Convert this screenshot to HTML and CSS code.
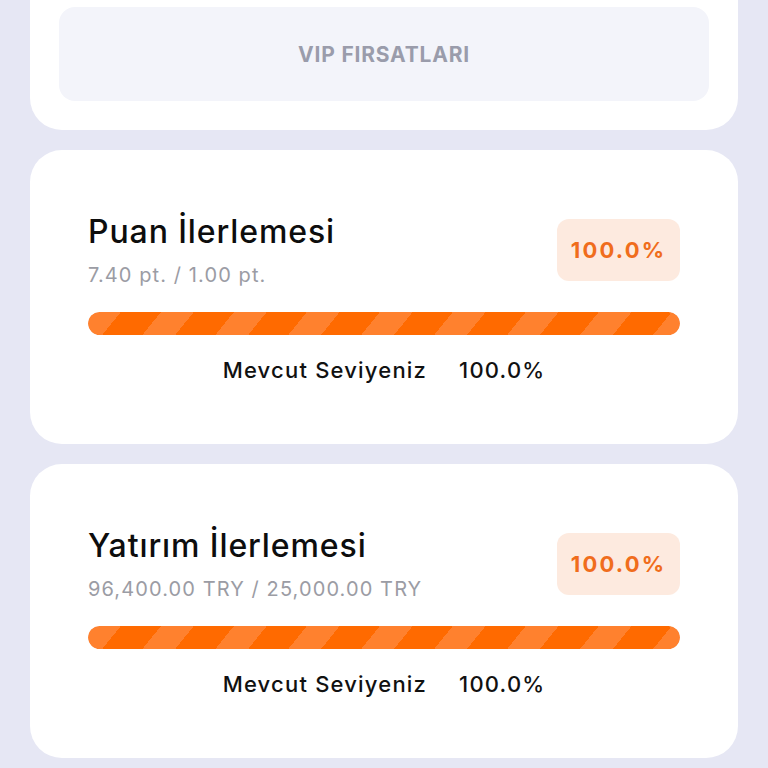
FILE: index.html
```html
<!DOCTYPE html>
<html lang="tr">

<head>
    <meta charset="UTF-8">
    <meta name="viewport" content="width=device-width, initial-scale=1.0">
    <title>VIP</title>
    <link rel="stylesheet" href="styles.css">
</head>

<body>
    <div class="page">
        <div class="card card-top">
            <a href="#" class="vip-btn">VIP FIRSATLARI</a>
        </div>

        <div class="card progress-card">
            <div class="head">
                <div class="head-text">
                    <h2 class="title">Puan İlerlemesi</h2>
                    <p class="sub">7.40 pt. / 1.00 pt.</p>
                </div>
                <span class="badge">100.0%</span>
            </div>
            <div class="bar">
                <div class="bar-fill" style="width: 100%"></div>
            </div>
            <div class="level">
                <span>Mevcut Seviyeniz</span>
                <span>100.0%</span>
            </div>
        </div>

        <div class="card progress-card">
            <div class="head">
                <div class="head-text">
                    <h2 class="title">Yatırım İlerlemesi</h2>
                    <p class="sub">96,400.00 TRY / 25,000.00 TRY</p>
                </div>
                <span class="badge">100.0%</span>
            </div>
            <div class="bar">
                <div class="bar-fill" style="width: 100%"></div>
            </div>
            <div class="level">
                <span>Mevcut Seviyeniz</span>
                <span>100.0%</span>
            </div>
        </div>
    </div>
</body>

</html>
```

FILE: styles.css
```css
* {
    margin: 0;
    padding: 0;
    box-sizing: border-box;
}

html,
body {
    background: #e6e7f4;
}

body {
    font-family: Inter, "Noto Sans", sans-serif;
    color: #111;
    overflow: hidden;
}

.page {
    display: flex;
    flex-direction: column;
    gap: 20px;
    padding: 0 30px;
}

.card {
    background: #fff;
    border-radius: 32px;
}

.card-top {
    margin-top: -60px;
    padding: 67px 29px 29px;
}

.vip-btn {
    display: flex;
    align-items: center;
    justify-content: center;
    height: 94px;
    background: #f3f4fa;
    border-radius: 16px;
    color: #9a9cab;
    font-size: 21px;
    font-weight: 700;
    text-decoration: none;
    letter-spacing: 0.8px;
}

.progress-card {
    height: 294px;
    padding: 62px 58px 0;
}

.head {
    display: flex;
    align-items: center;
    justify-content: space-between;
}

.title {
    font-size: 32px;
    font-weight: 500;
    line-height: 40px;
    color: #0d0d0d;
    letter-spacing: 0.9px;
}

.sub {
    margin-top: 10px;
    font-size: 20px;
    line-height: 26px;
    font-weight: 400;
    color: #9b9ca4;
    letter-spacing: 1.1px;
}

.badge {
    display: flex;
    align-items: center;
    justify-content: center;
    width: 123px;
    height: 62px;
    background: #fdeadf;
    border-radius: 12px;
    color: #f06d1c;
    font-size: 22px;
    font-weight: 700;
    letter-spacing: 2.2px;
}

.bar {
    margin-top: 24px;
    height: 23px;
    border-radius: 12px;
    background: #f2f2f6;
    overflow: hidden;
}

.bar-fill {
    height: 100%;
    border-radius: 12px;
    background: repeating-linear-gradient(129deg,
            #ff812e 0 25.5px,
            #ff6a00 25.5px 56.7px);
}

.level {
    margin-top: 20px;
    display: flex;
    justify-content: center;
    gap: 32px;
    font-size: 22px;
    line-height: 30px;
    font-weight: 500;
    color: #111;
    letter-spacing: 1.2px;
}
```
